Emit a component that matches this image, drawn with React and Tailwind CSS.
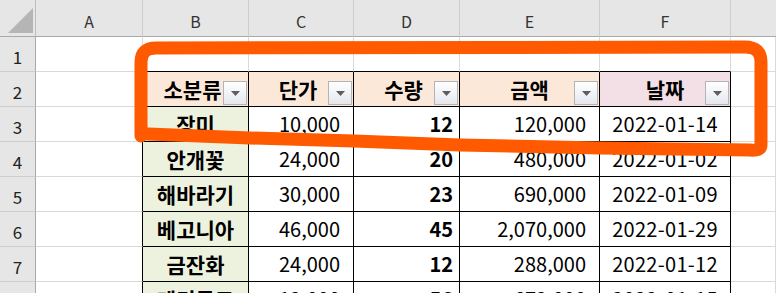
import React from "react";

const cols = ["A", "B", "C", "D", "E", "F", ""];
const rows = [
  ["장미", "10,000", "12", "120,000", "2022-01-14"],
  ["안개꽃", "24,000", "20", "480,000", "2022-01-02"],
  ["해바라기", "30,000", "23", "690,000", "2022-01-09"],
  ["베고니아", "46,000", "45", "2,070,000", "2022-01-29"],
  ["금잔화", "24,000", "12", "288,000", "2022-01-12"],
  ["메리골드", "12,000", "56", "672,000", "2022-01-15"],
];
const heads = ["소분류", "단가", "수량", "금액", "날짜"];

function Drop() {
  return (
    <div className="absolute right-[1px] bottom-[1px] w-[24px] h-[24px] border border-[#b4b4b4] bg-gradient-to-b from-white to-[#e4e8ee] flex items-center justify-center">
      <svg width="9" height="5" viewBox="0 0 9 5">
        <path d="M0 0 H9 L4.5 5 Z" fill="#5e5e5e" />
      </svg>
    </div>
  );
}

function Cell({ children, className = "" }) {
  return <div className={"relative flex items-center leading-none " + className}>{children}</div>;
}

export default function App() {
  const cells = [];
  cells.push(
    <div key="corner" className="relative bg-[#e6e6e6] border-r border-r-[#bdbdbd] border-b border-b-[#a9a9a9]">
      <svg className="absolute left-[8px] top-[8px]" width="25" height="25" viewBox="0 0 25 25">
        <path d="M25 0 V25 H0 Z" fill="#b5b5b5" />
      </svg>
    </div>
  );
  cols.forEach((c, i) => {
    cells.push(
      <Cell
        key={"h" + i}
        className={
          "justify-center pt-[5px] bg-[#e6e6e6] border-b border-b-[#a9a9a9] text-[16px] text-[#333] " +
          (i < 6 ? "border-r border-r-[#cdcdcd]" : "")
        }
      >
        {c}
      </Cell>
    );
  });

  for (let r = 1; r <= 8; r++) {
    cells.push(
      <Cell
        key={"r" + r}
        className="justify-center pt-[4px] bg-[#e6e6e6] border-r border-r-[#a9a9a9] border-b border-b-[#cdcdcd] text-[17px] text-[#222]"
      >
        {r}
      </Cell>
    );
    for (let c = 0; c < 7; c++) {
      const inTable = r >= 2 && c >= 1 && c <= 5;
      let cls = "border-b border-r ";
      if (inTable) cls += "border-black text-black ";
      else {
        cls += "border-[#d9d9d9] ";
        if (c === 0 && r >= 2) cls += "border-r-black ";
        if (r === 1 && c >= 1 && c <= 5) cls += "border-b-black ";
      }
      let content = null;
      if (r === 2 && inTable) {
        cls += "justify-center font-bold pt-[1px] text-[21px] " + (c === 5 ? "bg-[#f3dfe6] " : "bg-[#fce8d9] ");
        content = (
          <>
            <span className={c === 1 ? "pr-[6px]" : c === 2 || c === 3 ? "pr-[6px]" : ""}>{heads[c - 1]}</span>
            <Drop />
          </>
        );
      } else if (r >= 3 && inTable) {
        const v = rows[r - 3][c - 1];
        if (c === 1) cls += "justify-center font-bold bg-[#edf2df] text-[21px] ";
        else if (c === 2 || c === 4) cls += "justify-end pr-[13px] text-[20px] ";
        else if (c === 3) cls += "justify-end pr-[6px] font-bold text-[20px] ";
        else cls += "justify-center text-[20px] tracking-[0.3px] ";
        content = v;
      }
      cells.push(
        <Cell key={r + "-" + c} className={cls}>
          {content}
        </Cell>
      );
    }
  }

  return (
    <div className="relative w-[776px] h-[293px] overflow-hidden bg-white font-['Noto_Sans_CJK_KR','Malgun_Gothic',sans-serif]">
      <div className="grid grid-cols-[36px_107px_106px_105px_106px_140px_131px_1fr] grid-rows-[37px_repeat(8,35px)]">
        {cells}
      </div>
      <svg className="absolute left-0 top-0 pointer-events-none" width="776" height="293" viewBox="0 0 776 293">
        <path
          d="M141 136 L141 62 Q141 48 156 48 L745 47 Q761 47 761 62 L761 145 Q761 151 750 150 L600 148 L460 145 L354 141 L250 138 L148 134"
          fill="none"
          stroke="#ff5a00"
          strokeWidth="13"
          strokeLinecap="round"
          strokeLinejoin="round"
        />
      </svg>
    </div>
  );
}
